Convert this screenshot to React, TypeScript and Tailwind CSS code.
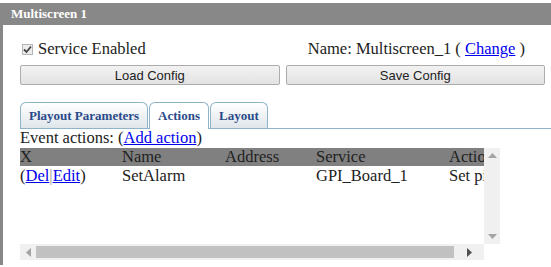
import React from "react";

const serif = "font-['Liberation_Serif','Times_New_Roman',serif]";
const sans = "font-['Liberation_Sans',Arial,sans-serif]";

const Tab = ({ label, active }: { label: string; active?: boolean }) => (
  <div
    className={`h-[26px] px-[8px] flex items-center rounded-t-[6px] border border-b-0 border-[#8fb3c9] text-[13px] font-bold text-[#2a4a8a] ${serif} ${
      active ? "bg-white h-[27px] -mb-px" : "bg-gradient-to-b from-white to-[#dfe6ea]"
    }`}
  >
    {label}
  </div>
);

const Button = ({ label }: { label: string }) => (
  <button
    className={`flex-1 h-[20px] border border-[#acacac] rounded-[2px] bg-gradient-to-b from-[#f2f2f2] to-[#e3e3e3] text-[13px] text-[#222] ${sans}`}
  >
    {label}
  </button>
);

export default function App() {
  return (
    <div className={`w-[551px] h-[267px] bg-white overflow-hidden pt-[3px] ${serif}`}>
      <div className="h-[262px] border-l-[3px] border-[#888]">
        <div className="h-[22px] bg-[#888] -ml-[3px] pl-[11px] flex items-center text-[13px] font-bold text-white">
          Multiscreen 1
        </div>

        <div className="pl-[17px]">
          <div className="flex items-center h-[18px] mt-[15px] text-[16.5px] text-[#222]">
            <span className="w-[11px] h-[11px] ml-[2px] mr-[5px] border border-[#b5b5b5] bg-[#ececec] flex items-center justify-center">
              <svg width="9" height="9" viewBox="0 0 9 9">
                <path d="M1 4.5 L3.5 7 L8 1.5" fill="none" stroke="#444" strokeWidth="1.8" />
              </svg>
            </span>
            <span>Service Enabled</span>
            <span className="ml-auto mr-[26px]">
              Name: Multiscreen_1 ({" "}
              <a href="#" className="text-[#0000ee] underline">Change</a> )
            </span>
          </div>

          <div className="flex gap-[6px] pr-[6px] mt-[7px]">
            <Button label="Load Config" />
            <Button label="Save Config" />
          </div>

          <div className="mt-[17px] flex items-end gap-px border-b border-[#8fb3c9]">
            <Tab label="Playout Parameters" />
            <Tab label="Actions" active />
            <Tab label="Layout" />
          </div>

          <div className="text-[16.5px] leading-[18px] text-[#222]">
            Event actions: (<a href="#" className="text-[#0000ee] underline">Add action</a>)
          </div>

          <div className="w-[480px] h-[112px] mt-px flex flex-col">
            <div className="flex flex-1">
              <div className="w-[464px] overflow-hidden text-[16.5px] leading-[18px] text-[#222]">
                <div className="flex bg-[#808080] h-[18px] whitespace-nowrap">
                  <span className="w-[102px] shrink-0">X</span>
                  <span className="w-[103px] shrink-0">Name</span>
                  <span className="w-[91px] shrink-0">Address</span>
                  <span className="w-[133px] shrink-0">Service</span>
                  <span className="shrink-0">Action</span>
                </div>
                <div className="flex h-[18px] mt-px whitespace-nowrap">
                  <span className="w-[102px] shrink-0">
                    (<a href="#" className="text-[#0000ee] underline">Del</a>
                    <span className="text-[#999]">|</span>
                    <a href="#" className="text-[#0000ee] underline">Edit</a>)
                  </span>
                  <span className="w-[103px] shrink-0">SetAlarm</span>
                  <span className="w-[91px] shrink-0"></span>
                  <span className="w-[133px] shrink-0">GPI_Board_1</span>
                  <span className="shrink-0">Set pin</span>
                </div>
              </div>
              <div className="w-[16px] bg-[#f0f0f0] flex flex-col justify-between items-center py-[5px]">
                <svg width="9" height="5" viewBox="0 0 9 5">
                  <path d="M0 5 L4.5 0 L9 5 Z" fill="#a3a3a3" />
                </svg>
                <svg width="9" height="5" viewBox="0 0 9 5">
                  <path d="M0 0 L4.5 5 L9 0 Z" fill="#a3a3a3" />
                </svg>
              </div>
            </div>
            <div className="flex h-[16px]">
              <div className="w-[464px] bg-[#f0f0f0] flex items-center">
                <div className="w-[16px] flex justify-center">
                  <svg width="5" height="9" viewBox="0 0 5 9">
                    <path d="M5 0 L0 4.5 L5 9 Z" fill="#a3a3a3" />
                  </svg>
                </div>
                <div className="flex-1 h-[12px] bg-[#c1c1c1]"></div>
                <div className="w-[30px] flex justify-center">
                  <svg width="5" height="9" viewBox="0 0 5 9">
                    <path d="M0 0 L5 4.5 L0 9 Z" fill="#505050" />
                  </svg>
                </div>
              </div>
            </div>
          </div>
        </div>
      </div>
    </div>
  );
}
